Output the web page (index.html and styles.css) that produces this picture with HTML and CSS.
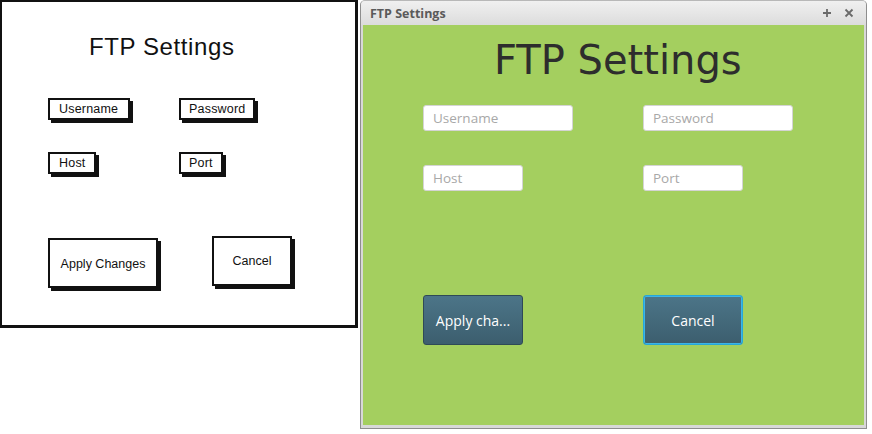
FILE: index.html
```html
<!DOCTYPE html>
<html>
<head>
<meta charset="utf-8">
<link rel="stylesheet" href="styles.css">
</head>
<body>
<div class="page">
  <section class="mock">
    <h1 class="mock-title">FTP Settings</h1>
    <div class="mock-grid">
      <div class="mock-field w-user">Username</div>
      <div class="mock-field w-pass">Password</div>
      <div class="mock-field w-host">Host</div>
      <div class="mock-field w-port">Port</div>
    </div>
    <div class="mock-buttons">
      <div class="mock-btn apply">Apply Changes</div>
      <div class="mock-btn cancel">Cancel</div>
    </div>
  </section>
  <section class="window">
    <header class="titlebar">
      <span class="wtitle">FTP Settings</span>
      <span class="wctl">
        <svg width="10" height="10" viewBox="0 0 10 10"><path d="M5 1v8M1 5h8" stroke="#6a6a6a" stroke-width="1.8"/></svg>
        <svg width="10" height="10" viewBox="0 0 10 10"><path d="M1.5 1.5l7 7M8.5 1.5l-7 7" stroke="#6a6a6a" stroke-width="1.8"/></svg>
      </span>
    </header>
    <div class="content">
      <h1 class="app-title">FTP Settings</h1>
      <div class="form">
        <div class="input wide">Username</div>
        <div class="input wide">Password</div>
        <div class="input narrow">Host</div>
        <div class="input narrow">Port</div>
      </div>
      <div class="actions">
        <button class="btn">Apply cha...</button>
        <button class="btn focused">Cancel</button>
      </div>
    </div>
  </section>
</div>
</body>
</html>
```

FILE: styles.css
```css
* { box-sizing: border-box; }
html, body { margin: 0; padding: 0; background: #fff; }
.page {
  display: flex;
  align-items: flex-start;
  width: 872px;
  height: 434px;
  overflow: hidden;
}

/* ---------- mockup ---------- */
.mock {
  width: 358px;
  height: 328px;
  border: 2px solid #111;
  border-right-width: 3px;
  border-bottom-width: 3px;
  padding: 0 0 0 46px;
  font-family: "Liberation Sans", Arial, sans-serif;
  color: #111;
  flex-shrink: 0;
}
.mock-title {
  margin: 32px 0 0 41px;
  font-weight: normal;
  font-size: 24px;
  line-height: 26px;
  letter-spacing: 0.6px;
}
.mock-grid {
  display: grid;
  grid-template-columns: 131px auto;
  row-gap: 32px;
  margin-top: 38px;
  justify-items: start;
}
.mock-field {
  height: 22px;
  border: 2px solid #111;
  box-shadow: 3px 3px 0 #111;
  font-size: 12.5px;
  line-height: 18px;
  padding-left: 9px;
  background: #fff;
  letter-spacing: 0.2px;
}
.w-user { width: 82px; }
.w-pass { width: 76px; padding-left: 8px; }
.w-host { width: 48px; }
.w-port { width: 44px; padding-left: 8px; }
.mock-buttons {
  display: flex;
  align-items: flex-start;
  gap: 54px;
  margin-top: 62px;
}
.mock-btn {
  border: 2px solid #111;
  box-shadow: 3px 3px 0 #111;
  font-size: 12.5px;
  display: flex;
  align-items: center;
  justify-content: center;
  background: #fff;
}
.mock-btn.apply { width: 110px; height: 50px; margin-top: 2px; padding-top: 2px; }
.mock-btn.cancel { width: 80px; height: 50px; }

/* ---------- window ---------- */
.window {
  width: 507px;
  height: 429px;
  margin-left: 2px;
  border: 1px solid #8e8e8e;
  border-top-color: #b8b8b8;
  border-radius: 5px 5px 0 0;
  background: #d8d8d8;
  padding: 0 2px 3px 2px;
  display: flex;
  flex-direction: column;
  flex-shrink: 0;
}
.titlebar {
  height: 24px;
  display: flex;
  align-items: center;
  justify-content: space-between;
  padding: 0 12px 0 9px;
  background: linear-gradient(#f0f0f0, #dcdcdc);
  margin: 0 -2px;
  border-radius: 4px 4px 0 0;
}
.wtitle {
  font-family: "Open Sans", "Noto Sans", sans-serif;
  font-weight: bold;
  font-size: 12.5px;
  color: #5a5a5a;
}
.wctl { display: flex; gap: 12px; align-items: center; }
.wctl svg { display: block; }

.content {
  flex: 1;
  background: #a4cf5f;
  font-family: "Open Sans", "Noto Sans", sans-serif;
  padding-left: 60px;
}
.app-title {
  margin: 12px 0 0 71px;
  font-family: "DejaVu Sans", sans-serif;
  font-weight: normal;
  font-size: 40px;
  line-height: 46px;
  color: #2d2d2d;
}
.form {
  display: grid;
  grid-template-columns: 220px auto;
  row-gap: 34px;
  margin-top: 22px;
  justify-items: start;
}
.input {
  height: 26px;
  background: #fff;
  border: 1px solid #d4d4d4;
  border-radius: 3px;
  padding-left: 9px;
  font-size: 13.5px;
  line-height: 24px;
  color: #a8a8a8;
}
.input.wide { width: 150px; }
.input.narrow { width: 100px; }
.actions {
  display: flex;
  gap: 120px;
  margin-top: 104px;
}
.btn {
  width: 100px;
  height: 50px;
  border: 1px solid #2f4a57;
  border-radius: 3px;
  background: linear-gradient(#4c7588, #3c5e6e);
  color: #fff;
  font-family: "Open Sans", "Noto Sans", sans-serif;
  font-size: 14px;
  padding: 0;
}
.btn.focused {
  border: 1px solid #27a7d8;
  box-shadow: 0 0 0 1px #3cb6e6 inset;
}
```
